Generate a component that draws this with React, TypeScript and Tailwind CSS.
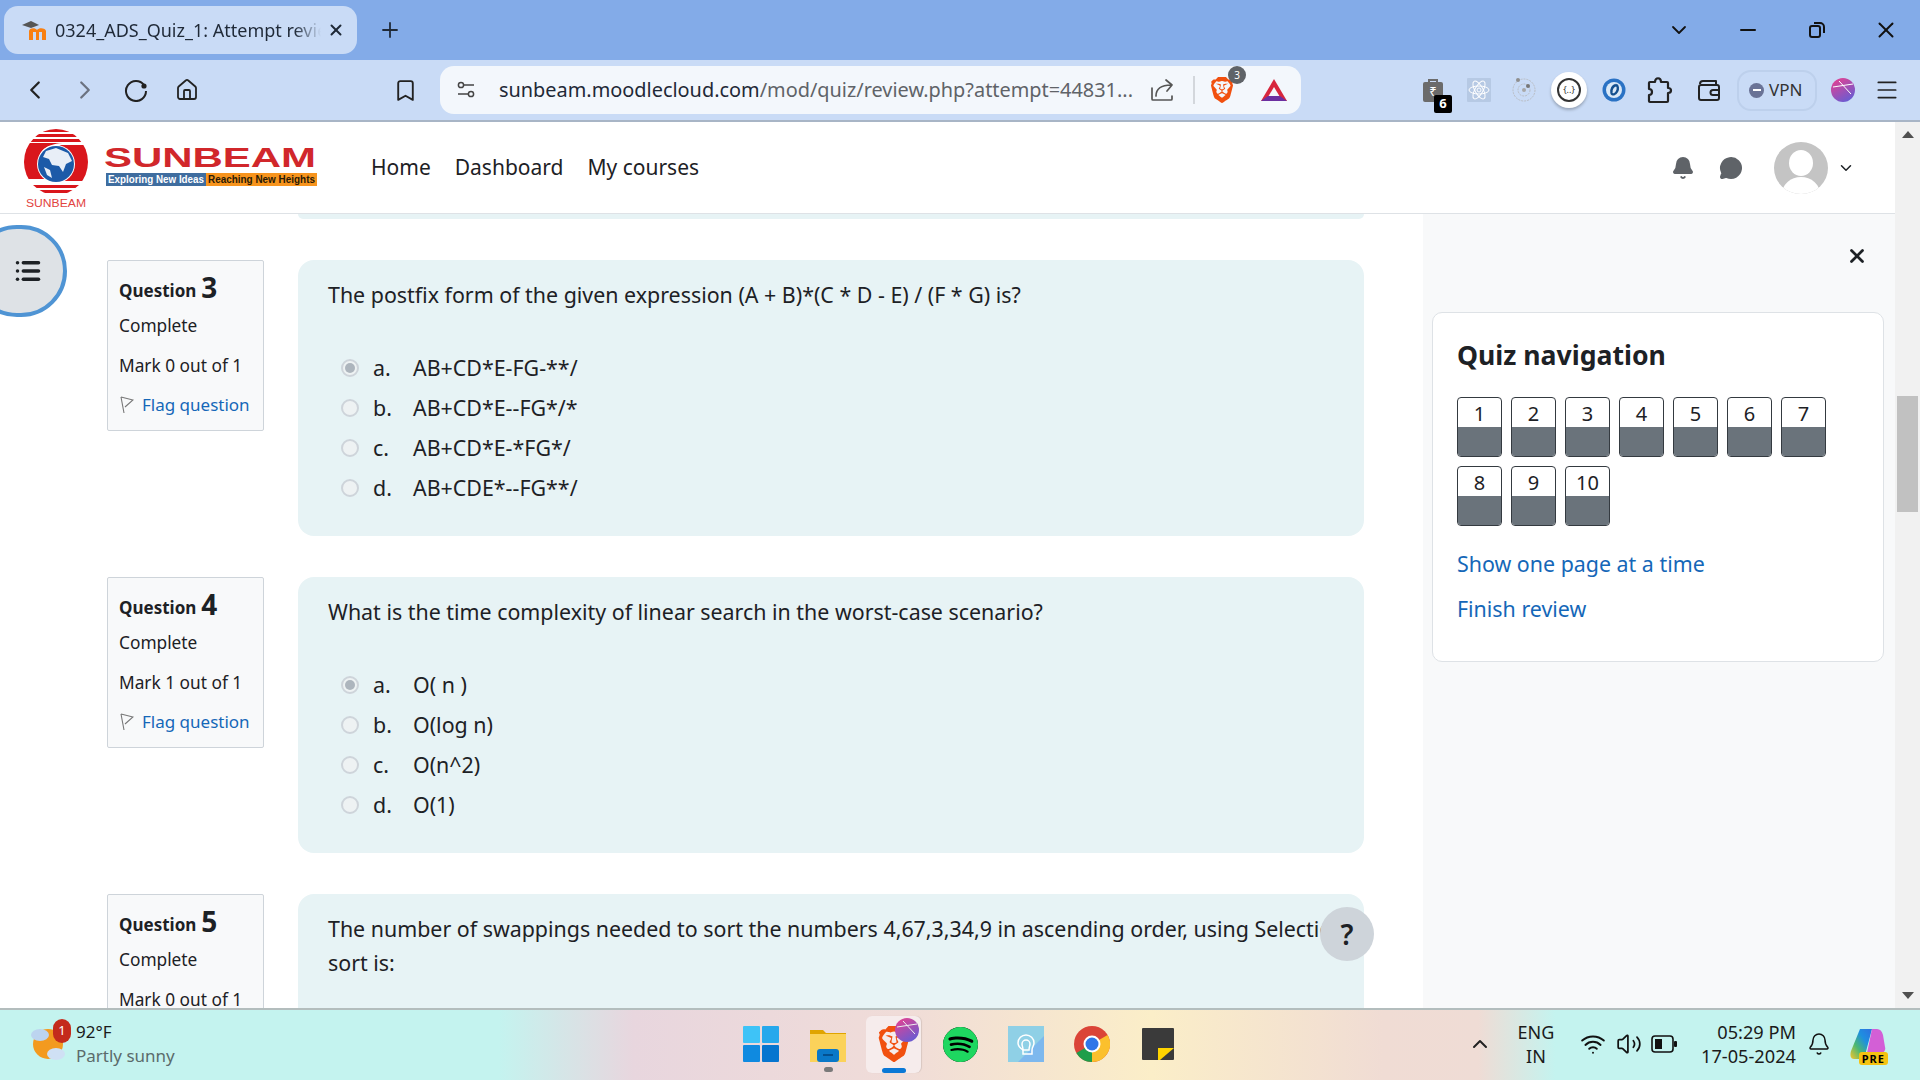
import React from 'react';
import {
  Bell, Bookmark, ChevronDown, ChevronLeft, ChevronRight, ChevronUp, Home, List, Menu, MessageCircle,
  Minus, Plus, Volume2, Wifi, X,
} from 'lucide-react';
import { SiBrave, SiSpotify } from 'react-icons/si';

const sans = { fontFamily: '"Noto Sans", sans-serif' };

const questions = [
  {
    num: 3,
    mark: 'Mark 0 out of 1',
    text: 'The postfix form of the given expression (A + B)*(C * D - E) / (F * G) is?',
    options: ['AB+CD*E-FG-**/', 'AB+CD*E--FG*/*', 'AB+CD*E-*FG*/', 'AB+CDE*--FG**/'],
  },
  {
    num: 4,
    mark: 'Mark 1 out of 1',
    text: 'What is the time complexity of linear search in the worst-case scenario?',
    options: ['O( n )', 'O(log n)', 'O(n^2)', 'O(1)'],
  },
  {
    num: 5,
    mark: 'Mark 0 out of 1',
    text: 'The number of swappings needed to sort the numbers 4,67,3,34,9 in ascending order, using Selection sort is:',
    options: [],
  },
];

const Slot = ({ w, children }: { w: number; children: React.ReactNode }) => (
  <div className="flex shrink-0 items-center justify-center" style={{ width: w }}>
    {children}
  </div>
);

const BraveIcon = ({ size }: { size: number }) => <SiBrave size={size} color="#f1500f" />;

const SunbeamLogo = () => (
  <svg width="330" height="90" viewBox="0 0 330 90" className="shrink-0">
    <defs>
      <clipPath id="disc">
        <ellipse cx="56" cy="39" rx="32" ry="33" />
      </clipPath>
    </defs>
    <g clipPath="url(#disc)" fill="#d9161c">
      <rect x="24" y="6" width="64" height="3" />
      <rect x="24" y="11" width="64" height="3" />
      <rect x="24" y="16" width="64" height="3" />
      <rect x="24" y="62" width="64" height="3" />
      <rect x="24" y="67" width="64" height="3" />
      <path d="M24 20h42c-20 0-27 8-27 17 0 8 5 14 14 19H24z" />
      <path d="M88 58H46c20 0 27-8 27-17 0-8-5-14-14-19h29z" />
    </g>
    <circle cx="56" cy="41" r="19" fill="#fff" />
    <circle cx="56" cy="41" r="18" fill="#1c5aa8" />
    <path d="M46 28l10-3 12 5 4 8-6 3-3 8-4-6-7-1-3-6-6-2z" fill="#e8eef7" />
    <path d="M44 44l6 3 2 8-5-3z" fill="#e8eef7" />
    <text x="104" y="44" textLength="212" lengthAdjust="spacingAndGlyphs" fontFamily="Liberation Sans" fontWeight="700" fontSize="28" fill="#d1272b">SUNBEAM</text>
    <rect x="106" y="50" width="100" height="13" fill="#3f6d9f" />
    <rect x="206" y="50" width="111" height="13" fill="#f7941d" />
    <text x="108" y="60" textLength="96" lengthAdjust="spacingAndGlyphs" fontFamily="Liberation Sans" fontWeight="700" fontSize="10" fill="#fff">Exploring New Ideas</text>
    <text x="208" y="60" textLength="107" lengthAdjust="spacingAndGlyphs" fontFamily="Liberation Sans" fontWeight="700" fontSize="10" fill="#2a1a05">Reaching New Heights</text>
    <text x="26" y="84" textLength="60" lengthAdjust="spacingAndGlyphs" fontFamily="Liberation Sans" fontSize="10" fill="#e2453f">SUNBEAM</text>
  </svg>
);

const Radio = ({ checked }: { checked: boolean }) => (
  <span className="flex h-[18px] w-[18px] items-center justify-center rounded-full border-2 border-[#ced4da] bg-[#eef2f3]">
    {checked && <span className="h-[10px] w-[10px] rounded-full bg-[#adb5bd]" />}
  </span>
);

const QuestionRow = ({ q }: { q: (typeof questions)[number] }) => (
  <div className="flex items-start">
    <div className="ml-[107px] h-[171px] w-[157px] shrink-0 rounded-[2px] border border-[#ced4da] bg-[#f8f9fa] pl-[11px] pt-[12px] text-[17.3px] text-[#1d2125]">
      <div className="flex h-[32px] items-end text-[17px] font-bold leading-[28px]">
        Question <span className="ml-[5px] text-[28px] leading-[35px]">{q.num}</span>
      </div>
      <div className="mt-[1px] h-[40px] leading-[40px]">Complete</div>
      <div className="h-[40px] leading-[40px]">{q.mark}</div>
      <div className="flex h-[38px] items-center text-[17px] text-[#1567b8]">
        <svg width="15" height="18" viewBox="0 0 15 18" fill="none" stroke="#777" strokeWidth="1.1" className="mr-[8px] shrink-0">
          <path d="M2 1l3 16M2 1l12 3-8 7" />
        </svg>
        Flag question
      </div>
    </div>
    <div className="ml-[34px] w-[1066px] shrink-0 rounded-[16px] bg-[#e7f3f5] pl-[30px] pr-[10px] pt-[18px] text-[21.4px] leading-[34px] text-[#1d2125]">
      <p className={q.options.length ? 'h-[70px] whitespace-nowrap' : 'h-[258px]'}>{q.text}</p>
      {q.options.length > 0 && (
        <ul className="h-[188px]">
          {q.options.map((o, i) => (
            <li key={o} className="flex h-[40px] items-center">
              <span className="ml-[13px] w-[32px]"><Radio checked={i === 0} /></span>
              <span className="w-[40px]">{'abcd'[i]}.</span>
              <span>{o}</span>
            </li>
          ))}
        </ul>
      )}
    </div>
  </div>
);

const NavCell = ({ n }: { n: number }) => (
  <div className="h-[60px] w-[45px] overflow-hidden rounded-[4px] border border-[#343a40] bg-white text-center text-[20px] leading-[32px] text-[#1d2125]">
    <div className="h-[29px]">{n}</div>
    <div className="h-[30px] bg-[#6a737b]" />
  </div>
);

const App = () => (
  <div className="flex h-screen w-[1920px] flex-col overflow-hidden bg-white" style={sans}>
    {/* tab strip */}
    <div className="flex h-[60px] shrink-0 items-center bg-[#83abe8]">
      <div className="ml-[4px] flex h-[48px] w-[353px] items-center rounded-[14px] bg-[#c9dbf6] pl-[16px]">
        <svg width="30" height="26" viewBox="0 0 30 26" className="shrink-0">
          <path d="M2 8l9-4 8 4-8 3z" fill="#555" />
          <path d="M9 23v-9c0-3 6-4 8-1 2-3 9-2 9 1v9h-4v-8h-3v8h-3v-8h-3v8z" fill="#f98012" />
        </svg>
        <span className="ml-[5px] w-[266px] whitespace-nowrap bg-[linear-gradient(90deg,#1f2937_90%,#c9dbf6_100%)] bg-clip-text text-[18px] text-transparent">0324_ADS_Quiz_1: Attempt revie</span>
        <X size={18} strokeWidth={2.6} color="#1f2937" className="ml-[6px]" />
      </div>
      <Plus size={24} strokeWidth={1.8} color="#1f2937" className="ml-[21px]" />
      <div className="ml-auto flex text-[#111]">
        <Slot w={69}><ChevronDown size={24} strokeWidth={1.8} /></Slot>
        <Slot w={69}><Minus size={24} strokeWidth={2} /></Slot>
        <Slot w={69}>
          <svg width="18" height="18" viewBox="0 0 18 18" fill="none" stroke="#111" strokeWidth="2">
            <rect x="2" y="5" width="10" height="11" rx="2" />
            <path d="M6 2h6a4 4 0 0 1 4 4v6" />
          </svg>
        </Slot>
        <Slot w={69}><X size={26} strokeWidth={1.8} /></Slot>
      </div>
    </div>

    {/* toolbar */}
    <div className="flex h-[62px] shrink-0 items-center border-b-2 border-[#a8b5c6] bg-[#c9dbf6] pl-[10px]">
      <Slot w={50}><ChevronLeft size={30} strokeWidth={1.8} color="#222" /></Slot>
      <Slot w={50}><ChevronRight size={30} strokeWidth={1.8} color="#6b7280" /></Slot>
      <Slot w={52}>
        <svg width="24" height="24" viewBox="0 0 24 24" fill="none" stroke="#222" strokeWidth="2">
          <path d="M20 7A10 10 0 1 0 22 13" />
          <circle cx="20" cy="8" r="2.6" fill="#222" stroke="none" />
        </svg>
      </Slot>
      <Slot w={50}><Home size={24} strokeWidth={1.8} color="#222" /></Slot>
      <div className="w-[168px]" />
      <Slot w={50}><Bookmark size={25} strokeWidth={1.8} color="#222" /></Slot>
      <div className="w-[10px]" />
      <div className="flex h-[48px] w-[861px] items-center rounded-[14px] bg-[#f3f7fc]">
        <Slot w={52}>
          <svg width="20" height="20" viewBox="0 0 20 20" fill="none" stroke="#444" strokeWidth="1.5">
            <circle cx="5" cy="5" r="2.6" />
            <path d="M8 5h10M2 14h10" />
            <circle cx="15" cy="14" r="2.6" />
          </svg>
        </Slot>
        <span className="ml-[7px] w-[632px] whitespace-nowrap text-[19.9px] text-[#5f6368]">
          <span className="text-[#1f2937]">sunbeam.moodlecloud.com</span>/mod/quiz/review.php?attempt=44831...
        </span>
        <Slot w={62}>
          <svg width="24" height="24" viewBox="0 0 24 24" fill="none" stroke="#555" strokeWidth="1.7" strokeLinecap="round" strokeLinejoin="round">
            <path d="M2 10v11a1 1 0 0 0 1 1h18a1 1 0 0 0 1-1v-3" />
            <path d="M6 18c0-7 5-11 15-11M16 2l6 5-5 6" />
          </svg>
        </Slot>
        <div className="h-[28px] w-[2px] bg-[#d3d7dc]" />
        <div className="relative ml-[13px] flex w-[28px] justify-center">
          <BraveIcon size={26} />
          <span className="absolute -right-[10px] -top-[11px] flex h-[18px] w-[18px] items-center justify-center rounded-full bg-[#5f6368] text-[10px] text-white">3</span>
        </div>
        <svg width="28" height="24" viewBox="0 0 28 24" className="ml-[24px]">
          <path d="M14 1L27 23H1z" fill="#d7263d" />
          <path d="M14 9l6 10H8z" fill="#f3f7fc" />
          <path d="M1 23l7-5h12l7 5z" fill="#6b2fa0" />
        </svg>
      </div>
      <div className="w-[110px]" />
      <div className="flex items-center">
        <div className="relative flex w-[44px] justify-center">
          <svg width="22" height="26" viewBox="0 0 22 26">
            <rect x="1" y="5" width="20" height="20" rx="2" fill="#6b6b6b" />
            <path d="M7 6V3h8v3" fill="none" stroke="#6b6b6b" strokeWidth="2" />
            <text x="11" y="19" textAnchor="middle" fontSize="13" fill="#fff">₹</text>
          </svg>
          <span className="absolute bottom-[-10px] right-[3px] flex h-[18px] w-[18px] items-center justify-center rounded-[2px] bg-black text-[13px] font-bold text-white">6</span>
        </div>
        <div className="ml-[2px] flex w-[44px] justify-center">
          <svg width="24" height="24" viewBox="0 0 24 24" fill="none" stroke="#fff" strokeWidth="1">
            <rect x="0" y="0" width="24" height="24" rx="1" fill="#b6c9e4" stroke="none" />
            <ellipse cx="12" cy="12" rx="10" ry="4" />
            <ellipse cx="12" cy="12" rx="10" ry="4" transform="rotate(60 12 12)" />
            <ellipse cx="12" cy="12" rx="10" ry="4" transform="rotate(120 12 12)" />
            <circle cx="12" cy="12" r="2" />
          </svg>
        </div>
        <div className="ml-[1px] flex w-[44px] justify-center">
          <svg width="26" height="26" viewBox="0 0 26 26" fill="none" stroke="#b9bdc4" strokeWidth="1" strokeDasharray="2 1">
            <circle cx="13" cy="13" r="11" />
            <circle cx="13" cy="13" r="6" />
            <circle cx="13" cy="13" r="2" fill="#a8a8a8" stroke="none" />
            <circle cx="7" cy="3" r="2" fill="#8e8e8e" stroke="none" />
            <circle cx="17" cy="9" r="2" fill="#777" stroke="none" />
          </svg>
        </div>
        <div className="ml-[1px] flex w-[44px] justify-center">
          <span className="flex h-[36px] w-[36px] items-center justify-center rounded-full bg-white shadow-[0_2px_3px_rgba(0,0,0,0.25)]">
            <span className="flex h-[24px] w-[24px] items-center justify-center rounded-full border-2 border-[#333] text-[9px] text-[#333]">{'{..}'}</span>
          </span>
        </div>
        <div className="ml-[1px] flex w-[44px] justify-center">
          <svg width="24" height="24" viewBox="0 0 24 24" fill="none">
            <circle cx="12" cy="12" r="11.5" fill="#2a72c4" />
            <circle cx="12" cy="12" r="8" fill="#dbe9f7" />
            <path d="M14 7c-3 1-5 4-4.500 8 .5 2.500 4 1.500 5.500-1.500s1-6-1-6.500" stroke="#14508f" strokeWidth="2.4" />
          </svg>
        </div>
        <div className="ml-[2px] flex w-[44px] justify-center">
          <svg width="26" height="28" viewBox="0 0 26 28" fill="none" stroke="#222" strokeWidth="2.2" strokeLinejoin="round">
            <path d="M3 6h5c0-5 6-5 6 0h6a1 1 0 0 1 1 1v5c4 0 4 5 0 5v8a1 1 0 0 1-1 1H3a1 1 0 0 1-1-1v-6c4 0 4-6 0-6V7a1 1 0 0 1 1-1z" />
          </svg>
        </div>
        <div className="ml-[5px] flex w-[44px] justify-center">
          <svg width="24" height="24" viewBox="0 0 24 24" fill="none" stroke="#222" strokeWidth="2" strokeLinejoin="round">
            <path d="M3 6a3 3 0 0 1 3-3h13v4" />
            <rect x="2" y="7" width="20" height="15" rx="2" />
            <path d="M22 12h-6a2.500 2.500 0 0 0 0 5h6" />
          </svg>
        </div>
        <div className="ml-[6px] flex h-[41px] w-[80px] items-center rounded-[14px] border-2 border-[#bdd0ec] pl-[10px]">
          <span className="flex h-[15px] w-[15px] items-center justify-center rounded-full bg-[#6a7396]">
            <span className="h-[2px] w-[8px] bg-white" />
          </span>
          <span className="ml-[5px] text-[17px] text-[#333]">VPN</span>
        </div>
        <div className="ml-[4px] flex w-[44px] justify-center">
          <svg width="24" height="24" viewBox="0 0 24 24">
            <defs>
              <linearGradient id="prof" x1="0" y1="0" x2="0.6" y2="1">
                <stop offset="0" stopColor="#ee3f8c" />
                <stop offset="1" stopColor="#6d5bd0" />
              </linearGradient>
            </defs>
            <circle cx="12" cy="12" r="12" fill="url(#prof)" />
            <path d="M2 9l20-3M8 3l12 13" stroke="#fff" strokeWidth="1" />
          </svg>
        </div>
        <div className="flex w-[44px] justify-center"><Menu size={26} strokeWidth={1.6} color="#222" /></div>
      </div>
    </div>

    {/* page */}
    <div className="flex min-h-0 flex-1">
      <div className="flex min-w-0 flex-1 flex-col">
        <header className="flex h-[92px] shrink-0 items-center border-b border-[#dee2e6] bg-white text-[21px] text-[#1d2125]">
          <div className="w-[371px] shrink-0"><SunbeamLogo /></div>
          <nav className="flex gap-[24px]">
            <span>Home</span>
            <span>Dashboard</span>
            <span>My courses</span>
          </nav>
          <Bell size={24} fill="#5f6368" color="#5f6368" className="ml-[972px]" />
          <MessageCircle size={24} fill="#5f6368" color="#5f6368" className="ml-[24px]" />
          <svg width="54" height="52" viewBox="0 0 54 52" className="ml-[31px]">
            <defs>
              <clipPath id="ava"><ellipse cx="27" cy="26" rx="27" ry="26" /></clipPath>
            </defs>
            <ellipse cx="27" cy="26" rx="27" ry="26" fill="#c4c4c4" />
            <g clipPath="url(#ava)" fill="#fff">
              <ellipse cx="27" cy="21" rx="12" ry="13" />
              <ellipse cx="27" cy="52" rx="19" ry="17" />
            </g>
          </svg>
          <ChevronDown size={18} strokeWidth={2} color="#1d2125" className="ml-[9px]" />
        </header>
        <div className="flex min-h-0 flex-1">
          <main className="relative w-[1423px] shrink-0 overflow-hidden bg-white">
            <div className="ml-[298px] h-[5px] w-[1066px] rounded-b-[16px] bg-[#e7f3f5]" />
            <div className="mt-[41px] flex flex-col gap-[41px]">
              {questions.map(q => <QuestionRow key={q.num} q={q} />)}
            </div>
            <div className="absolute -left-[29px] top-[11px] flex h-[92px] w-[96px] items-center justify-end rounded-full border-[4px] border-[#4f94d4] bg-[#dee2e6] pr-[21px]">
              <List size={28} strokeWidth={3} color="#1d2125" />
            </div>
            <div className="absolute left-[1320px] top-[693px] flex h-[54px] w-[54px] items-center justify-center rounded-full bg-[#ced4da] text-[28px] font-semibold text-[#1d2125]">?</div>
          </main>
          <aside className="flex-1 bg-[#f8f9fa] pl-[9px] pr-[11px]">
            <div className="flex h-[98px] justify-end pr-[16px] pt-[31px]">
              <X size={22} strokeWidth={3} color="#1d2125" />
            </div>
            <div className="h-[350px] rounded-[10px] border border-[#dee2e6] bg-white pl-[24px] pt-[22px]">
              <h2 className="text-[26.6px] font-bold leading-[40px] text-[#1d2125]">Quiz navigation</h2>
              <div className="mt-[22px] flex w-[380px] flex-wrap gap-x-[9px] gap-y-[9px]">
                {[1, 2, 3, 4, 5, 6, 7, 8, 9, 10].map(n => <NavCell key={n} n={n} />)}
              </div>
              <a className="mt-[21px] block text-[21.4px] leading-[34px] text-[#1567b8]">Show one page at a time</a>
              <a className="mt-[11px] block text-[21.4px] leading-[34px] text-[#1567b8]">Finish review</a>
            </div>
          </aside>
        </div>
      </div>
      {/* scrollbar */}
      <div className="flex w-[25px] shrink-0 flex-col items-center bg-[#f1f1f1]">
        <div className="mt-[9px] h-0 w-0 border-x-[6px] border-b-[7px] border-x-transparent border-b-[#505050]" />
        <div className="mt-[258px] h-[116px] w-[21px] bg-[#c1c1c1]" />
        <div className="mb-[9px] mt-auto h-0 w-0 border-x-[6px] border-t-[7px] border-x-transparent border-t-[#505050]" />
      </div>
    </div>

    {/* taskbar */}
    <div className="flex h-[72px] shrink-0 items-center border-t-2 border-[#b3bdbd] bg-[linear-gradient(90deg,#c4f3ef_0%,#c4f3ef_26%,#e8d6de_33%,#f0dcd8_47%,#fbeec8_60%,#f0dcd4_72%,#efdcd5_77%,#c4f3ef_81%,#c4f3ef_100%)] pb-[2px]">
      <div className="relative ml-[30px] w-[36px]">
        <svg width="36" height="42" viewBox="0 0 36 42">
          <circle cx="18" cy="21" r="15" fill="#f39a1f" />
          <ellipse cx="10" cy="12" rx="9" ry="6" fill="#bcd4ef" />
          <ellipse cx="26" cy="31" rx="9" ry="6" fill="#cfe0f4" />
        </svg>
        <span className="absolute -right-[5px] -top-[4px] flex h-[24px] w-[18px] items-center justify-center rounded-full bg-[#c42b1c] text-[13px] text-white">1</span>
      </div>
      <div className="ml-[10px] w-[200px] text-[17px] leading-[24px]">
        <div className="text-[#1b1b1b]">92°F</div>
        <div className="text-[#5b6b6b]">Partly sunny</div>
      </div>
      <div className="ml-[467px] flex w-[36px] justify-center">
        <svg width="36" height="36" viewBox="0 0 36 36">
          <rect x="0" y="0" width="17" height="17" rx="1" fill="#3ec3f7" />
          <rect x="19" y="0" width="17" height="17" rx="1" fill="#26a8ec" />
          <rect x="0" y="19" width="17" height="17" rx="1" fill="#0f8ae0" />
          <rect x="19" y="19" width="17" height="17" rx="1" fill="#0675cf" />
        </svg>
      </div>
      <div className="relative ml-[31px] flex w-[36px] justify-center">
        <svg width="36" height="36" viewBox="0 0 36 36">
          <path d="M0 4h13l3 3h20v29H0z" fill="#e0a400" />
          <rect x="0" y="8" width="36" height="28" fill="#fbd25a" />
          <rect x="7" y="23" width="22" height="13" rx="3" fill="#0a78c8" />
          <rect x="13" y="28" width="10" height="2" fill="#04508f" />
        </svg>
        <span className="absolute -bottom-[10px] h-[5px] w-[9px] rounded-full bg-[#7a7a7a]" />
      </div>
      <div className="relative ml-[20px] flex h-[57px] w-[55px] items-center justify-center rounded-[6px] bg-[#f6ecec] shadow-[1px_0_1px_rgba(0,0,0,0.1)]">
        <BraveIcon size={36} />
        <svg width="24" height="24" viewBox="0 0 24 24" className="absolute right-[2px] top-[2px]">
          <circle cx="12" cy="12" r="12" fill="url(#prof)" />
          <path d="M2 9l20-3M8 3l12 13" stroke="#eee" strokeWidth="1" />
        </svg>
        <span className="absolute bottom-0 h-[5px] w-[24px] rounded-full bg-[#0a78d6]" />
      </div>
      <div className="ml-[21px] flex w-[36px] justify-center">
        <span className="flex h-[35px] w-[35px] items-center justify-center rounded-full bg-black">
          <SiSpotify size={35} color="#1ed760" />
        </span>
      </div>
      <div className="ml-[30px] flex w-[36px] justify-center">
        <svg width="36" height="36" viewBox="0 0 36 36">
          <rect width="36" height="36" fill="#8fd0e6" />
          <path d="M10 36L36 10v26z" fill="#7db8ee" />
          <path d="M10 17a8 8 0 1 1 16 0c0 3-2 4-2 7v4h-9v-4c-3-2-5-4-5-7z" fill="none" stroke="#fff" strokeWidth="1.5" />
          <path d="M14 18a4 4 0 1 1 8 0c0 2-1 3-1 6h-6c0-3-1-4-1-6z" fill="none" stroke="#fff" strokeWidth="1.5" />
        </svg>
      </div>
      <div className="ml-[30px] flex w-[36px] justify-center">
        <svg width="36" height="36" viewBox="0 0 36 36">
          <circle cx="18" cy="18" r="18" fill="#db4437" />
          <path d="M18 18L2.400 27A18 18 0 0 0 18 36z" fill="#1e9e4a" />
          <path d="M18 18L18 36A18 18 0 0 0 33.600 9z" fill="#fbc02d" />
          <circle cx="18" cy="18" r="8.500" fill="#fff" />
          <circle cx="18" cy="18" r="6.500" fill="#2f76e8" />
        </svg>
      </div>
      <div className="ml-[32px] flex w-[32px] justify-center">
        <svg width="32" height="32" viewBox="0 0 32 32">
          <rect width="32" height="32" rx="1" fill="#3a3a3a" />
          <path d="M16 32V20h16L18 32z" fill="#ffd400" />
        </svg>
      </div>
      <div className="ml-[294px] flex w-[24px] justify-center"><ChevronUp size={24} strokeWidth={2} color="#222" /></div>
      <div className="ml-[14px] w-[60px] text-center text-[18px] leading-[24px] text-[#1b1b1b]">
        <div>ENG</div>
        <div>IN</div>
      </div>
      <Wifi size={26} strokeWidth={1.8} color="#111" className="ml-[14px]" />
      <Volume2 size={26} strokeWidth={1.6} color="#111" className="ml-[10px]" />
      <svg width="26" height="18" viewBox="0 0 26 18" className="ml-[9px]">
        <rect x="1" y="1" width="21" height="16" rx="3" fill="none" stroke="#111" strokeWidth="1.6" />
        <rect x="4" y="4" width="7" height="10" fill="#111" />
        <rect x="23" y="6" width="3" height="6" rx="1" fill="#111" />
      </svg>
      <div className="ml-[4px] w-[115px] text-right text-[18.2px] leading-[24px] text-[#1b1b1b]">
        <div>05:29 PM</div>
        <div>17-05-2024</div>
      </div>
      <Bell size={24} strokeWidth={1.5} color="#111" className="ml-[11px]" />
      <div className="relative ml-[19px] w-[36px]">
        <svg width="36" height="36" viewBox="0 0 36 36">
          <defs>
            <linearGradient id="cop" x1="0" y1="1" x2="1" y2="0">
              <stop offset="0" stopColor="#f7c52a" />
              <stop offset="0.35" stopColor="#4bb872" />
              <stop offset="0.65" stopColor="#1e8fe0" />
              <stop offset="1" stopColor="#2f6fe0" />
            </linearGradient>
          </defs>
          <path d="M10 3h12l-8 30H4C0 33 0 28 1 25z" fill="url(#cop)" />
          <path d="M22 3h5c3 0 5 2 6 6l2 12c1 3-1 6-5 6H17z" fill="#d35fd6" />
        </svg>
        <span className="absolute -bottom-[3px] -right-[2px] rounded-[3px] bg-[#f5c211] px-[3px] text-[11px] font-bold leading-[13px] tracking-[1px] text-black">PRE</span>
      </div>
    </div>
  </div>
);

export default App;
